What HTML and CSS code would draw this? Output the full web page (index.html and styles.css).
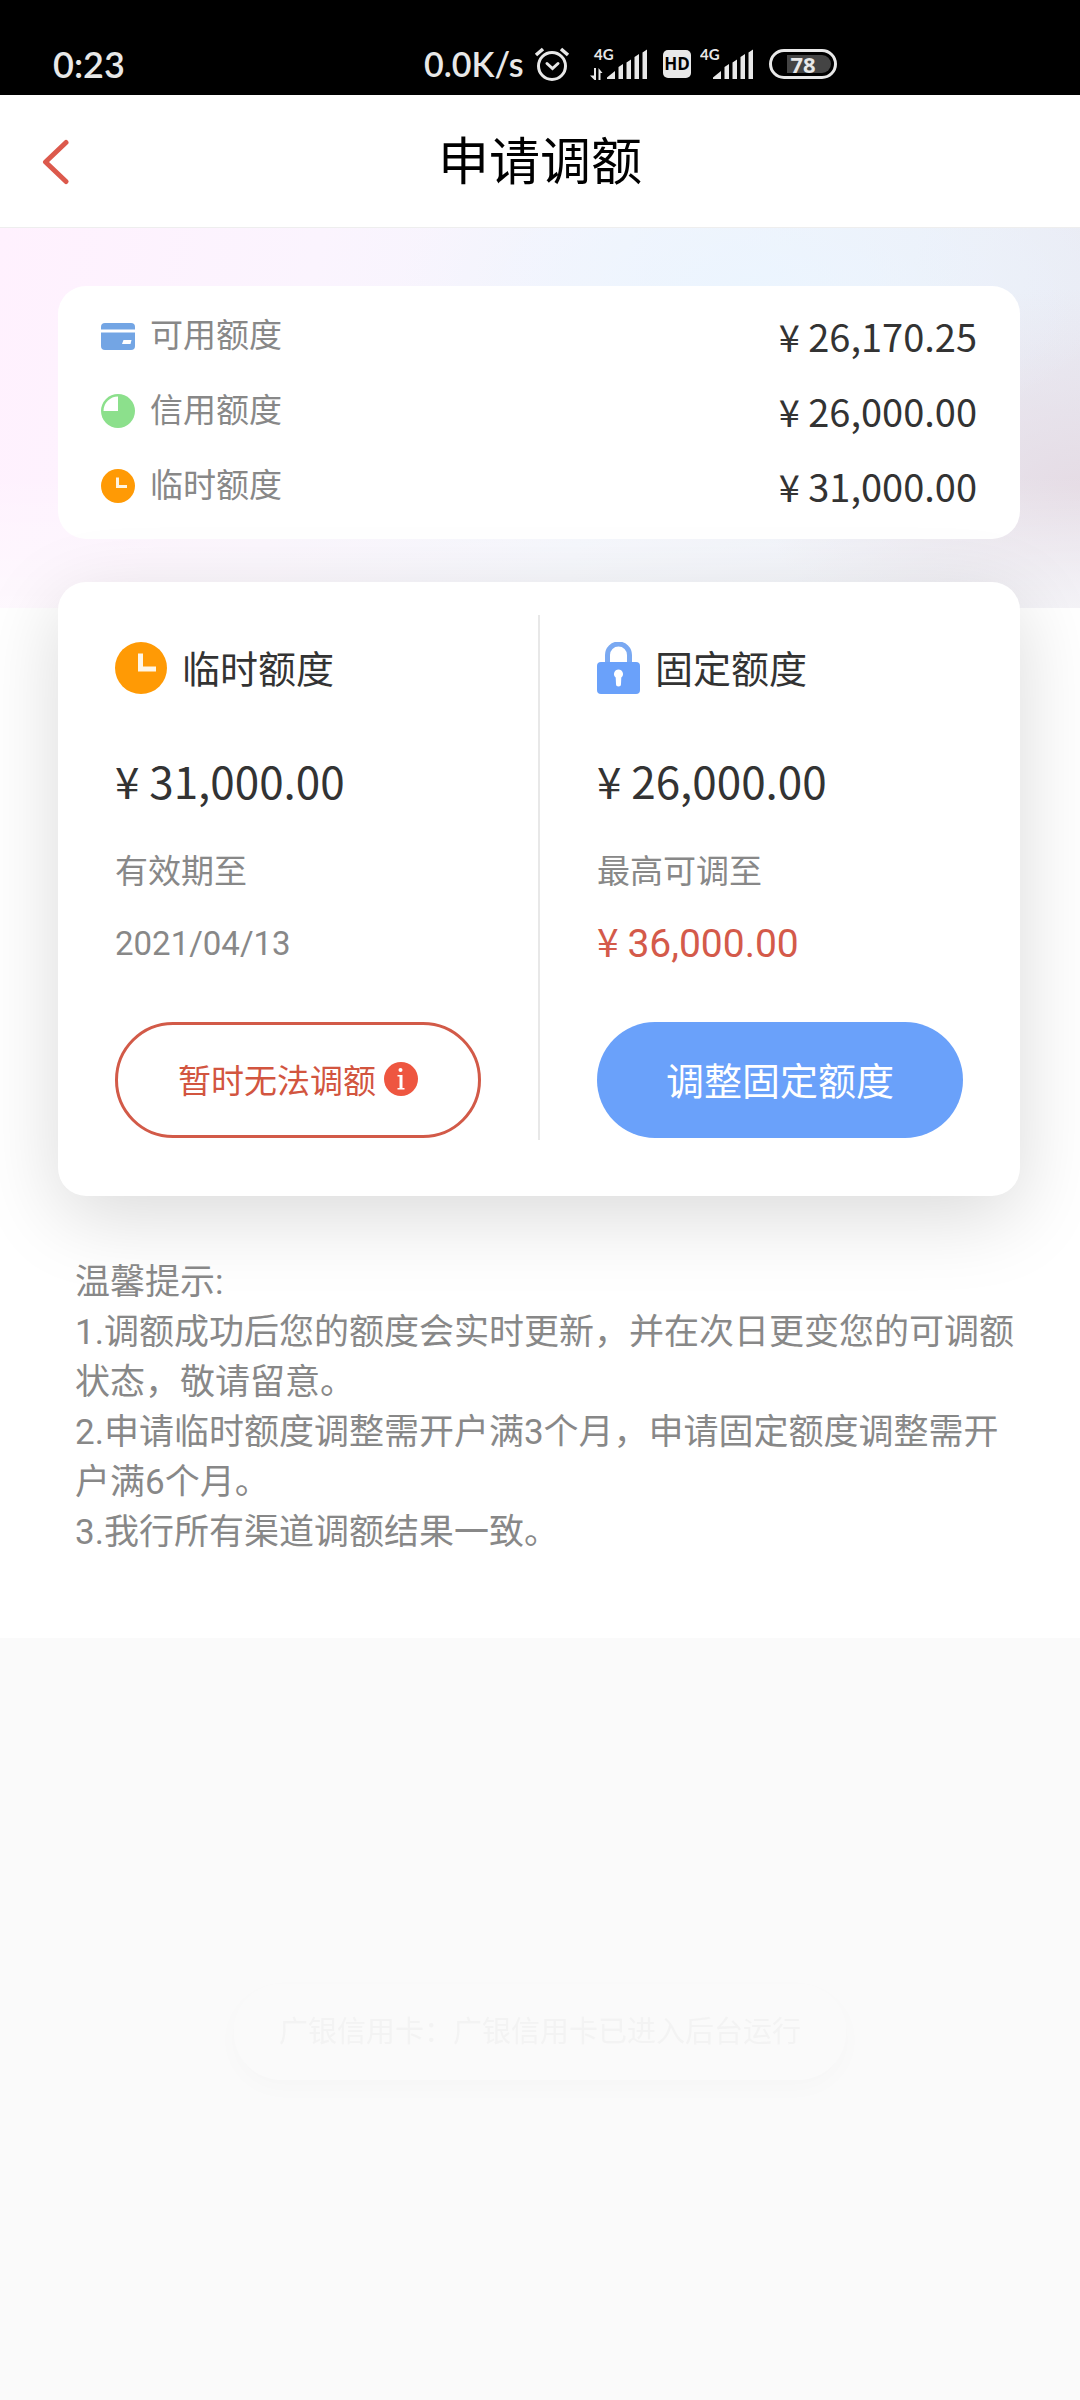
FILE: index.html
```html
<!DOCTYPE html>
<html lang="zh-CN">
<head>
<meta charset="utf-8">
<meta name="viewport" content="width=device-width, initial-scale=1">
<title>申请调额</title>
<link rel="stylesheet" href="styles.css">
</head>
<body>
<div class="statusbar">
  <span class="clock">0:23</span>
  <div class="status-icons">
    <span class="speed">0.0K/s</span>
    <svg class="alarm" width="36" height="36" viewBox="0 0 36 36" fill="none" stroke="#e8e8e8" stroke-width="3" stroke-linecap="round">
      <circle cx="18" cy="20" r="13.5"/><path d="M2 9 9 3M27 3l7 6" stroke-width="3.6" stroke-linecap="butt"/><path d="m13 17.500 5.500 5 5.500-5"/>
    </svg>
    <svg class="signal" width="58" height="42" viewBox="0 -4 58 42" fill="#e8e8e8">
      <text class="net" x="4" y="13">4G</text>
      <path d="M4 21h2v12H4.500L0 28.500h4zM8.500 33V21l4 5h-2v7z"/>
      <path d="M17 32V30.500L25 24v8zM28.500 32V20l4.500-3v15zM36.500 32V15.500l4.500-3V32zM44.500 32V10l4.500-3v25zM52.500 32V5.500L57 2.500V32z"/>
    </svg>
    <span class="hd">HD</span>
    <svg class="signal" width="54" height="42" viewBox="4 -4 54 42" fill="#e8e8e8">
      <text class="net" x="4" y="13">4G</text>
      <path d="M17 32V30.500L25 24v8zM28.500 32V20l4.500-3v15zM36.500 32V15.500l4.500-3V32zM44.500 32V10l4.500-3v25zM52.500 32V5.500L57 2.500V32z"/>
    </svg>
    <span class="battery"><span class="battery-level">78</span></span>
  </div>
</div>

<header class="navbar">
  <button class="back" type="button" aria-label="返回">
    <svg width="30" height="46" viewBox="0 0 30 46" fill="none" stroke="#dc594c" stroke-width="5" stroke-linecap="round" stroke-linejoin="round"><path d="M25 3.500 4.500 23 25 42.500"/></svg>
  </button>
  <h1 class="title">申请调额</h1>
</header>

<main class="content">
  <dl class="card summary">
    <div class="summary-row">
      <dt class="summary-label">
        <svg width="34" height="34" viewBox="0 0 34 34"><rect y="4" width="34" height="27" rx="4" fill="#73a5e4"/><path d="M0 10.500h34v3H0zM22.500 21h8l-1 4h-8.500z" fill="#fff"/></svg>
        可用额度
      </dt>
      <dd class="summary-value">¥ 26,170.25</dd>
    </div>
    <div class="summary-row">
      <dt class="summary-label">
        <svg width="34" height="34" viewBox="0 0 34 34"><circle cx="17" cy="17" r="17" fill="#8ce08c"/><path d="M17 2.500V17H2.500A14.500 14.500 0 0 1 17 2.500z" fill="#fff"/></svg>
        信用额度
      </dt>
      <dd class="summary-value">¥ 26,000.00</dd>
    </div>
    <div class="summary-row">
      <dt class="summary-label">
        <svg width="34" height="34" viewBox="0 0 34 34"><circle cx="17" cy="17" r="17" fill="#ff9a05"/><path d="M16.500 8.500v9H26" fill="none" stroke="#fff4e0" stroke-width="3"/></svg>
        临时额度
      </dt>
      <dd class="summary-value">¥ 31,000.00</dd>
    </div>
  </dl>

  <div class="card quotas">
    <section class="quota">
      <h2 class="quota-title">
        <svg width="52" height="52" viewBox="0 0 52 52"><circle cx="26" cy="26" r="26" fill="#ff9a05"/><path d="M25.500 11.500v15.500h15.500" fill="none" stroke="#fff6e6" stroke-width="5"/></svg>
        临时额度
      </h2>
      <p class="quota-amount">¥ 31,000.00</p>
      <p class="quota-note">有效期至</p>
      <p class="quota-note">2021/04/13</p>
      <button class="btn btn-outline" type="button">暂时无法调额
        <svg width="34" height="34" viewBox="0 0 34 34"><circle cx="17" cy="17" r="17" fill="#ee5640"/><circle cx="16.500" cy="8" r="2" fill="#fff"/><path d="M13.500 13h5v13H20.500V27.500h-7V26h2V14.500h-2z" fill="#fff"/></svg>
      </button>
    </section>
    <section class="quota">
      <h2 class="quota-title">
        <svg width="43" height="52" viewBox="0 0 43 52"><path d="M10.500 22V13a11 11 0 0 1 22 0v9" fill="none" stroke="#7aa9f2" stroke-width="5"/><rect y="20" width="43" height="32" rx="4" fill="#6aa1fa"/><path d="M21.500 27.500a4.500 4.500 0 0 1 2.800 8l-.3 6.500a2.500 2.500 0 0 1-5 0l-.3-6.500a4.500 4.500 0 0 1 2.800-8z" fill="#fff"/></svg>
        固定额度
      </h2>
      <p class="quota-amount">¥ 26,000.00</p>
      <p class="quota-note">最高可调至</p>
      <p class="quota-note quota-max"><span class="yen">¥ </span>36,000.00</p>
      <button class="btn btn-primary" type="button">调整固定额度</button>
    </section>
  </div>

  <section class="tips">
    <p>温馨提示:</p>
    <p>1.调额成功后您的额度会实时更新，并在次日更变您的可调额状态，敬请留意。</p>
    <p>2.申请临时额度调整需开户满3个月，申请固定额度调整需开户满6个月。</p>
    <p>3.我行所有渠道调额结果一致。</p>
  </section>
</main>

<div class="toast" role="status">广银信用卡：广银信用卡已进入后台运行</div>
</body>
</html>
```
FILE: styles.css
```css
* { box-sizing: border-box; }

body {
  margin: 0;
  min-height: 100vh;
  background: #fafafa;
  color: #333;
  font-family: Roboto, "Noto Sans CJK SC", sans-serif;
}

h1, h2, p, dl, dd { margin: 0; font-weight: 400; }
svg { display: block; flex: none; }
button { font: inherit; cursor: pointer; }

/* Phone status bar */
.statusbar {
  display: flex;
  align-items: flex-end;
  height: 95px;
  padding: 0 53px 13px;
  background: #000;
  color: #e8e8e8;
  font-family: Lato, sans-serif;
  font-weight: 600;
}
.clock { flex: 0 0 371px; font-size: 36px; line-height: 36px; }
.status-icons { display: flex; align-items: center; height: 36px; }
.speed { width: 103px; font-size: 34px; line-height: 36px; white-space: nowrap; }
.alarm { margin-left: 7px; }
.signal { margin-left: 20px; }
.net { font: 700 15px Lato, sans-serif; }
.hd {
  width: 28px;
  height: 28px;
  margin: 0 9px 0 15px;
  border-radius: 5px;
  background: #e8e8e8;
  color: #000;
  font: 700 17px/28px "Open Sans", sans-serif;
  text-align: center;
}
.hd + .signal { margin-left: 0; }
.battery {
  width: 68px;
  height: 30px;
  margin-left: 15px;
  padding: 3px;
  border: 3px solid #e8e8e8;
  border-radius: 15px;
}
.battery-level {
  display: block;
  height: 18px;
  border-radius: 9px;
  background: linear-gradient(90deg, #000 12px, #444 12px);
  font: 700 22px/18px "Open Sans", sans-serif;
  text-align: center;
}

/* Title bar */
.navbar {
  display: grid;
  grid-template-columns: 120px 1fr 120px;
  align-items: center;
  height: 133px;
  padding-top: 4px;
  background: #fff;
  border-bottom: 1px solid #eee;
}
.back {
  display: flex;
  padding: 18px 41px 20px;
  border: 0;
  background: none;
}
.title {
  color: #000;
  font-size: 51px;
  line-height: 60px;
  text-align: center;
}

/* Page content */
.content {
  padding: 58px 60px 80px 58px;
  background:
    linear-gradient(180deg, transparent 65%, rgba(255, 255, 255, .55)) 0 0 / 100% 380px no-repeat,
    radial-gradient(ellipse 360px 160px at 760px 60px, rgba(235, 245, 255, .9), transparent) 0 0 / 100% 380px no-repeat,
    radial-gradient(ellipse 320px 200px at 100% 260px, rgba(229, 219, 228, .95), transparent) 0 0 / 100% 380px no-repeat,
    linear-gradient(100deg, #fff1fe 0, #fbf4fe 28%, #f3f5fc 55%, #edf0f8 80%, #e9ebf4 100%) 0 0 / 100% 380px no-repeat,
    #fff;
}
.card { border-radius: 28px; background: #fff; }

.summary { padding: 12px 43px 16px; }
.summary-row {
  display: flex;
  align-items: center;
  justify-content: space-between;
  height: 75px;
}
.summary-label {
  display: flex;
  align-items: center;
  gap: 15px;
  color: #888;
  font-size: 33px;
  line-height: 48px;
}
.summary-value {
  font-family: "Noto Sans CJK SC", sans-serif;
  font-size: 38px;
  line-height: 60px;
}

.quotas {
  display: flex;
  margin-top: 43px;
  padding: 33px 0 56px;
  box-shadow: 0 20px 80px rgba(0, 0, 0, .15);
}
.quota { flex: 1; padding: 27px 57px 2px; }
.quota + .quota { border-left: 2px solid #e8e8e8; }
.quota-title {
  display: flex;
  gap: 15px;
  font-size: 38px;
  line-height: 56px;
}
.quota-amount {
  margin-top: 52px;
  font-family: "Noto Sans CJK SC", sans-serif;
  font-size: 44px;
  line-height: 60px;
}
.quota-note {
  margin-top: 38px;
  color: #888;
  font-size: 33px;
  line-height: 48px;
}
.quota-note + .quota-note { margin-top: 24px; }
.quota-max { color: #d45a4a; font-size: 39px; }
.yen { font-family: "Noto Sans CJK SC", sans-serif; line-height: 36px; }

.btn {
  display: flex;
  align-items: center;
  justify-content: center;
  gap: 8px;
  width: 100%;
  height: 116px;
  margin-top: 54px;
  padding: 0 0 3px;
  border: 0;
  border-radius: 58px;
}
.btn-outline {
  border: 3px solid #d25a48;
  background: #fff;
  color: #d2553f;
  font-size: 33px;
}
.btn-primary { background: #6aa1fa; color: #fff; font-size: 38px; }

.tips {
  margin-top: 62px;
  padding: 0 0 0 17px;
  color: #888;
  font-size: 35px;
  line-height: 50px;
}

/* Fading notice over the page */
.toast {
  position: fixed;
  bottom: 320px;
  left: 50%;
  transform: translateX(-50%);
  padding: 26px 45px;
  border-radius: 50px;
  background: #fafafa;
  box-shadow: 0 8px 24px rgba(0, 0, 0, .02);
  color: #f3f3f3;
  font-size: 29px;
  line-height: 44px;
  white-space: nowrap;
}
```
